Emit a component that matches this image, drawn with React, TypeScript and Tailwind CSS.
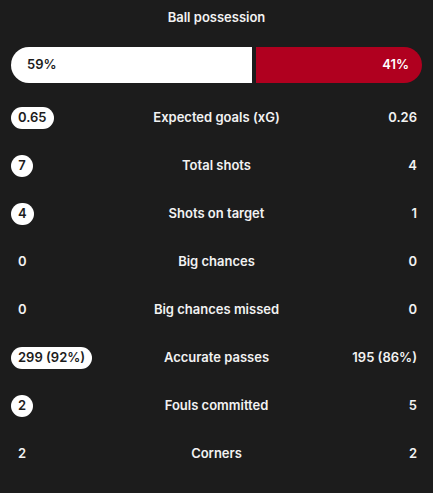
import React from 'react';

type Stat = {
  label: string;
  home: string;
  away: string;
  homePill: boolean;
};

const stats: Stat[] = [
  { label: 'Expected goals (xG)', home: '0.65', away: '0.26', homePill: true },
  { label: 'Total shots', home: '7', away: '4', homePill: true },
  { label: 'Shots on target', home: '4', away: '1', homePill: true },
  { label: 'Big chances', home: '0', away: '0', homePill: false },
  { label: 'Big chances missed', home: '0', away: '0', homePill: false },
  { label: 'Accurate passes', home: '299 (92%)', away: '195 (86%)', homePill: true },
  { label: 'Fouls committed', home: '2', away: '5', homePill: true },
  { label: 'Corners', home: '2', away: '2', homePill: false },
];

const App = () => {
  return (
    <div
      className="w-[433px] h-[493px] bg-[#1c1c1c] text-[#f2f2f2] px-[11px] pt-[8px] overflow-hidden"
      style={{ fontFamily: 'Inter, "Noto Sans", sans-serif' }}
    >
      <h2 className="text-center text-[13px] font-semibold leading-[18px]">
        Ball possession
      </h2>

      {/* possession bar */}
      <div className="flex gap-[4px] h-[36px] mt-[21px] text-[13px] font-semibold">
        <div className="flex items-center bg-white text-[#1c1c1c] rounded-l-full pl-[16px] w-[241px]">
          59%
        </div>
        <div className="flex items-center justify-end flex-1 bg-[#b0001f] text-white rounded-r-full pr-[13px]">
          41%
        </div>
      </div>

      <div className="flex flex-col mt-[11px]">
        {stats.map((s) => (
          <div
            key={s.label}
            className="flex items-center justify-between h-[48px] text-[13px] font-semibold"
          >
            <div className="w-[110px] flex">
              {s.homePill ? (
                <span className="inline-flex items-center justify-center min-w-[22px] h-[22px] px-[7px] rounded-full bg-white text-[#1c1c1c]">
                  {s.home}
                </span>
              ) : (
                <span className="px-[7px]">{s.home}</span>
              )}
            </div>
            <div className="flex-1 text-center">{s.label}</div>
            <div className="w-[110px] flex justify-end">
              <span className="px-[5px]">{s.away}</span>
            </div>
          </div>
        ))}
      </div>
    </div>
  );
};

export default App;
